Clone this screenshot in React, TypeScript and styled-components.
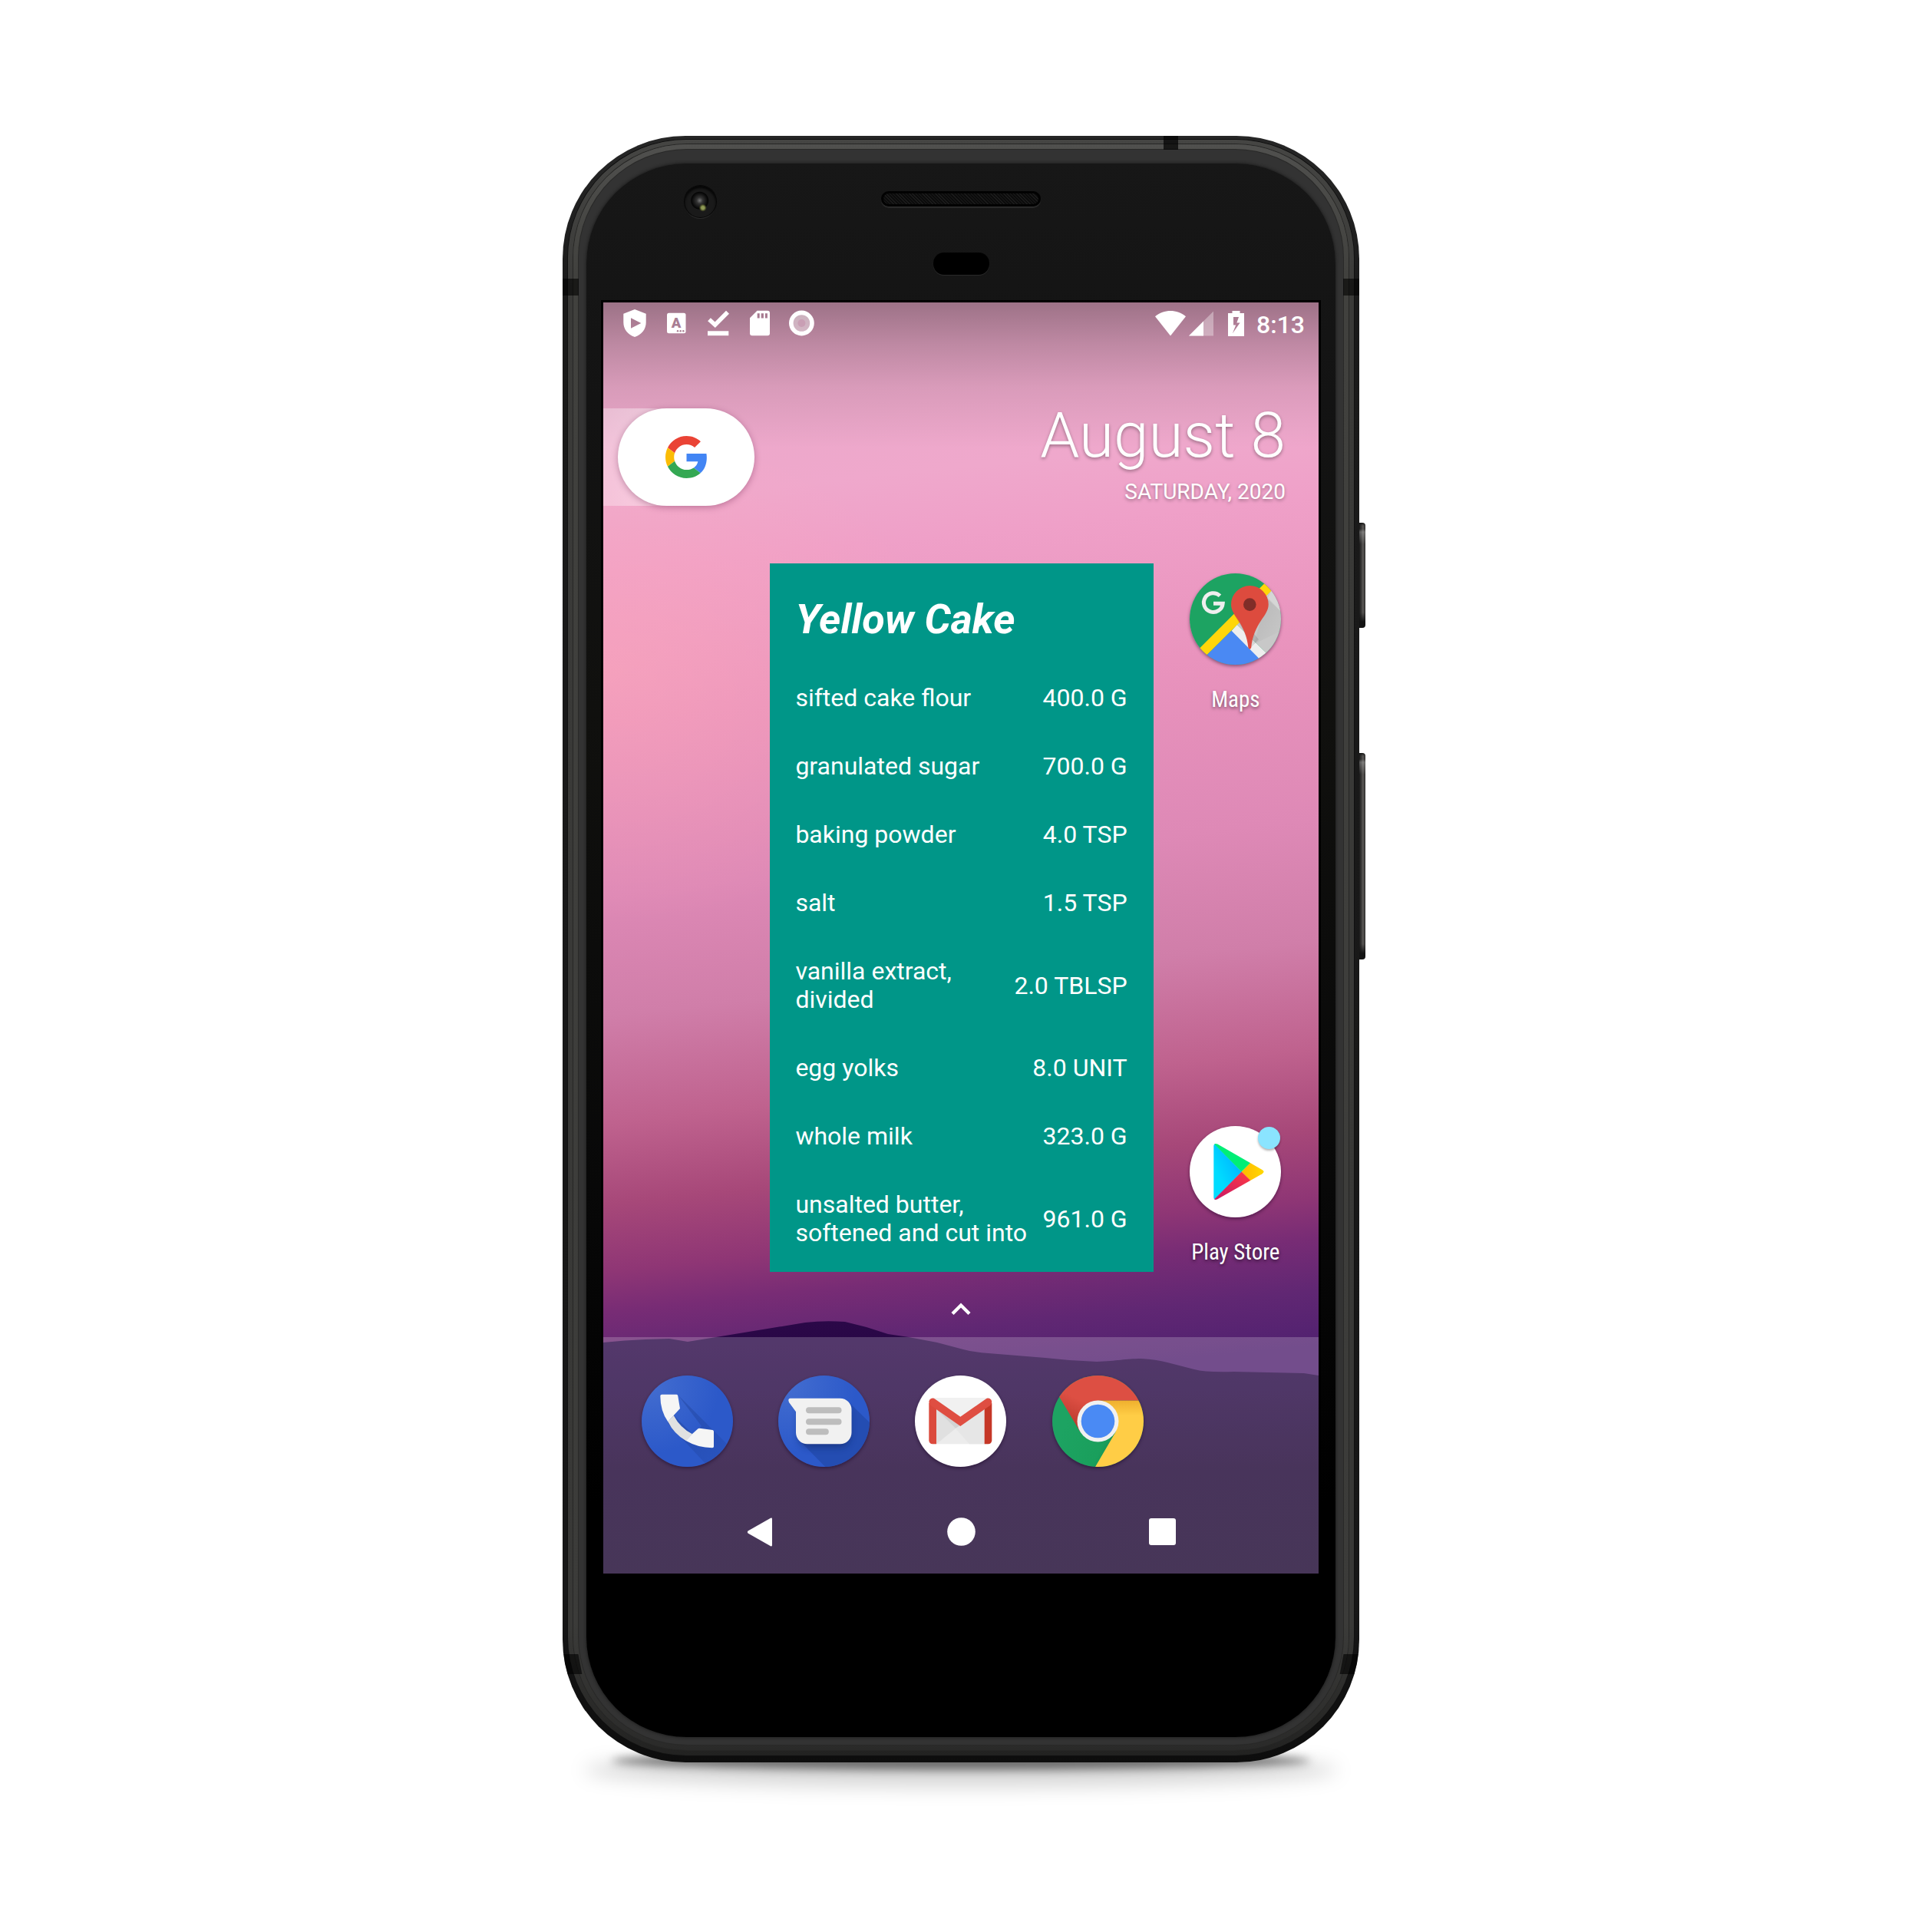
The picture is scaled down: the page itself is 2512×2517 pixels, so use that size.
import React from "react";
import styled, { createGlobalStyle } from "styled-components";

const GlobalStyle = createGlobalStyle`
  *, *::before, *::after { box-sizing: border-box; }
  body {
    margin: 0;
    background: #fff;
    color: #fff;
    font-family: Roboto, "Noto Sans", sans-serif;
  }
  button {
    margin: 0;
    padding: 0;
    border: 0;
    background: none;
    color: inherit;
    font: inherit;
    cursor: pointer;
  }
  svg { display: block; }
`;

/* ---------- device ---------- */

const Page = styled.main`
  display: flex;
  justify-content: center;
  padding: 177px 24px 221px;
`;

const Device = styled.div`
  display: flex;
  width: 100%;
  max-width: 1046px;
`;

const Body = styled.div`
  position: relative;
  flex: 1;
  min-width: 0;
`;

const GroundShadow = styled.div<{ $inset: number; $drop: number; $height: number; $blur: number; $alpha: number }>`
  position: absolute;
  left: ${(p) => p.$inset}px;
  right: ${(p) => p.$inset}px;
  bottom: ${(p) => -p.$drop}px;
  height: ${(p) => p.$height}px;
  border-radius: 50%;
  background: rgba(0, 0, 0, ${(p) => p.$alpha});
  filter: blur(${(p) => p.$blur}px);
`;

const Frame = styled.div`
  position: relative;
  overflow: hidden;
  padding: 5px 7px 9px;
  border-radius: 160px;
  background: linear-gradient(#262626, #1a1a1a 10%, #171717 90%, #0d0d0d);
`;

const OuterBand = styled.div`
  padding: 6px 7px 7px;
  border-radius: 154px;
  background: linear-gradient(#454543, #3a3a38 10%, #383836 92%, #222221);
  box-shadow: 0 0 0 1px #101010;
`;

const InnerBand = styled.div`
  padding: 7px 7px 7px;
  border-radius: 148px;
  background: linear-gradient(#50504e, #41413e 8%, #3b3b39 92%, #2a2a29);
  box-shadow: 0 0 0 1px #262625;
`;

const Rim = styled.div`
  padding: 18px 10px 10px;
  border-radius: 141px;
  background: #333;
  box-shadow: 0 0 0 1px #292928;
`;

const Glass = styled.div`
  display: flex;
  flex-direction: column;
  border-radius: 130px;
  background: linear-gradient(#171717, #131313 15%, #10100e 35%, #080808 65%, #000 85%);
  box-shadow: 0 0 4px #161616;
`;

const Antenna = styled.span<{ $side: "left" | "right"; $place: "upper" | "lower" }>`
  position: absolute;
  z-index: 1;
  ${(p) => p.$side}: 0;
  ${(p) => (p.$place === "upper" ? "top: 186px;" : "bottom: 115px;")}
  width: ${(p) => (p.$place === "upper" ? 21 : 27)}px;
  height: ${(p) => (p.$place === "upper" ? 22 : 26)}px;
  background: rgba(0, 0, 0, 0.6);
  clip-path: ${(p) => {
    if (p.$place === "upper") return "none";
    return p.$side === "left"
      ? "polygon(0 0, 76% 0, 94% 100%, 0 100%)"
      : "polygon(24% 0, 100% 0, 100% 100%, 6% 100%)";
  }};
`;

const TopAntenna = styled.span`
  position: absolute;
  z-index: 1;
  top: 0;
  right: 236px;
  width: 19px;
  height: 18px;
  background: rgba(0, 0, 0, 0.7);
`;

const SideKeys = styled.div`
  display: flex;
  flex-direction: column;
  gap: 163px;
  width: 8px;
  padding-top: 504px;
`;

const SideKey = styled.span<{ $length: number }>`
  height: ${(p) => p.$length}px;
  border-radius: 0 4px 4px 0;
  background:
    linear-gradient(#141414, transparent 4px, transparent calc(100% - 20px), #141414 calc(100% - 8px)),
    linear-gradient(transparent 8px, rgba(255, 255, 255, 0.25) 12px, transparent 28px),
    linear-gradient(90deg, #1b1b1b, #3a3938 35%, #5c5a58 60%, #2c2b2a);
`;

const TopBezel = styled.div`
  display: grid;
  grid-template-columns: 1fr 208px 1fr;
  height: 178px;
  padding: 0 18px;
`;

const CameraSlot = styled.div`
  padding: 29px 0 0 110px;
`;

const Camera = styled.span`
  display: block;
  width: 41px;
  height: 41px;
  border-radius: 50%;
  background:
    radial-gradient(circle at 58% 70%, #8f9a55 0 2px, rgba(90, 96, 40, 0.5) 4px, transparent 5px),
    radial-gradient(circle at 48% 47%, #777 0, #333 4px, #0a0a0a 10px, #050505 11px, transparent 12px),
    #1a1a1a;
  box-shadow: 0 0 0 1px #070707, inset 0 3px 3px #050505, 0 2px 1px #2c2c2c;
`;

const Sensors = styled.div`
  display: flex;
  flex-direction: column;
  align-items: center;
  gap: 60px;
  padding-top: 36px;
`;

const Speaker = styled.span`
  width: 100%;
  height: 20px;
  border-radius: 10px;
  border: 3px solid #020202;
  background: repeating-linear-gradient(45deg, #1b1b1b 0 1px, #0c0c0c 1px 3px);
  box-shadow: 0 2px 1px #2b2b2b;
`;

const Proximity = styled.span`
  width: 73px;
  height: 29px;
  border-radius: 14px;
  background: #000;
  box-shadow: 0 1px 1px #2b2b2b;
`;

const Chin = styled.div`
  height: 210px;
`;

/* ---------- screen ---------- */

const Screen = styled.div`
  position: relative;
  isolation: isolate;
  display: flex;
  flex-direction: column;
  margin: 0 19px;
  border: 3px solid #000;
  overflow: hidden;
  background:
    linear-gradient(
      rgba(0, 0, 0, 0.32),
      rgba(0, 0, 0, 0.19) 54px,
      rgba(0, 0, 0, 0.08) 110px,
      transparent 190px
    ),
    radial-gradient(ellipse 460px 330px at 0 480px, rgba(255, 170, 185, 0.5), transparent),
    linear-gradient(
      174deg,
      #e6a8c6 0,
      #efa8cc 15%,
      #efa0c8 20%,
      #e993bd 31%,
      #de89b6 44%,
      #d07ea9 53%,
      #bf628e 61%,
      #a74879 67%,
      #8f3675 72%,
      #782c75 75%,
      #602773 79%,
      #512170 83%
    );
`;

const Hills = styled.svg`
  position: absolute;
  z-index: -1;
  left: 0;
  bottom: 0;
  width: 100%;
  height: 336px;
`;

const StatusBar = styled.header`
  display: flex;
  justify-content: space-between;
  height: 54px;
  padding: 0 18px 0 14px;
`;

const StatusGroup = styled.div`
  display: flex;
  align-items: center;
`;

const Clock = styled.time`
  margin-left: 16px;
  font-size: 32px;
  line-height: 40px;
  padding-top: 4px;
  font-weight: 500;
`;

const Gap = styled.span<{ $size: number }>`
  width: ${(p) => p.$size}px;
`;

const Glance = styled.section`
  display: flex;
  justify-content: space-between;
  align-items: flex-start;
  height: 286px;
`;

const SearchTab = styled.div`
  margin-top: 84px;
  padding-left: 19px;
  background: linear-gradient(90deg, rgba(255, 255, 255, 0.3), rgba(255, 255, 255, 0.4) 60px, transparent 90px);
`;

const SearchPill = styled.button`
  display: flex;
  align-items: center;
  justify-content: center;
  width: 178px;
  height: 127px;
  border-radius: 64px;
  background: #fff;
  box-shadow: 0 2px 8px rgba(90, 20, 60, 0.35);
`;

const DateBlock = styled.div`
  display: flex;
  flex-direction: column;
  align-items: flex-end;
  gap: 10px;
  margin-top: 71px;
  padding-right: 43px;
  text-shadow: 0 2px 4px rgba(0, 0, 0, 0.35);
`;

const DateMain = styled.span`
  font-size: 82px;
  line-height: 96px;
  font-weight: 300;
`;

const DateSub = styled.span`
  font-size: 28px;
  line-height: 32px;
  text-transform: uppercase;
`;

const Workspace = styled.section`
  display: grid;
  grid-template-columns: repeat(5, 1fr);
  padding: 0 19px 0 21px;
`;

const Recipe = styled.article`
  grid-column: 2 / 5;
  margin: 0 18px;
  padding: 41px 34px 6px 33px;
  background: #009688;
`;

const RecipeTitle = styled.h1`
  margin: 0 0 26px;
  font-size: 54px;
  line-height: 64px;
  font-weight: 700;
  font-style: italic;
`;

const Ingredients = styled.ul`
  margin: 0;
  padding: 0;
  list-style: none;
`;

const Ingredient = styled.li`
  display: flex;
  align-items: center;
  justify-content: space-between;
  gap: 10px;
  padding: 26px 0;
  font-size: 32px;
  line-height: 37px;
`;

const Amount = styled.span`
  flex: none;
`;

const AppColumn = styled.div`
  display: flex;
  flex-direction: column;
  justify-content: space-between;
  padding: 13px 0 10px;
`;

const AppButton = styled.button`
  display: flex;
  flex-direction: column;
  align-items: center;
  gap: 29px;
`;

const IconWrap = styled.span`
  position: relative;
  border-radius: 50%;
  box-shadow: 0 2px 4px rgba(20, 0, 30, 0.45);
`;

const Badge = styled.span`
  position: absolute;
  top: 1px;
  right: 1px;
  width: 29px;
  height: 29px;
  border-radius: 50%;
  background: #8ae4ff;
  box-shadow: 0 2px 3px rgba(0, 0, 0, 0.3);
`;

const AppLabel = styled.span`
  font-family: "Roboto Condensed", Roboto, sans-serif;
  font-size: 29px;
  line-height: 32px;
  white-space: nowrap;
  text-shadow: 0 2px 4px rgba(0, 0, 0, 0.5);
`;

const DrawerHandle = styled.button`
  display: flex;
  justify-content: center;
  height: 85px;
  padding-top: 38px;
`;

const Shelf = styled.footer`
  background: rgba(255, 255, 255, 0.2);
`;

const Dock = styled.div`
  display: grid;
  grid-template-columns: repeat(5, 1fr);
  padding: 50px 20px 30px;
`;

const NavBar = styled.nav`
  display: grid;
  grid-template-columns: repeat(3, 262px);
  justify-content: center;
  height: 109px;
`;

const NavButton = styled.button`
  display: flex;
  align-items: center;
  justify-content: center;
`;

/* ---------- drawings ---------- */

const GoogleG = () => (
  <svg width="55" height="55" viewBox="0 0 48 48">
    <path fill="#ea4335" d="M24 9.5c3.54 0 6.71 1.22 9.21 3.6l6.85-6.85C35.9 2.38 30.47 0 24 0 14.62 0 6.51 5.38 2.56 13.22l7.98 6.19C12.43 13.72 17.74 9.5 24 9.5z" />
    <path fill="#4285f4" d="M46.98 24.55c0-1.57-.15-3.09-.38-4.55H24v9.02h12.94c-.58 2.96-2.26 5.48-4.78 7.18l7.73 6c4.51-4.18 7.09-10.36 7.09-17.65z" />
    <path fill="#fbbc05" d="M10.53 28.59c-.48-1.45-.76-2.99-.76-4.59s.27-3.14.76-4.59l-7.98-6.19C.92 16.46 0 20.12 0 24c0 3.88.92 7.54 2.56 10.78l7.97-6.19z" />
    <path fill="#34a853" d="M24 48c6.48 0 11.93-2.13 15.89-5.81l-7.73-6c-2.15 1.45-4.92 2.3-8.16 2.3-6.26 0-11.57-4.22-13.47-9.91l-7.98 6.19C6.51 42.62 14.62 48 24 48z" />
  </svg>
);

const NoticeIcons = () => (
  <>
    <svg width="54" height="54" viewBox="0 0 54 54">
      <path fill="#fff" fillRule="evenodd" d="M27 9 41.7 14.7V26C41.7 35 36 42 27 45 18 42 12.3 35 12.3 26V14.7ZM22 20.3V33.7L35.3 27Z" />
    </svg>
    <svg width="54" height="54" viewBox="0 0 54 54">
      <rect x="15" y="13.7" width="24.5" height="26.6" rx="2.5" fill="#fff" />
      <text x="27" y="33.3" textAnchor="middle" fontFamily="Roboto, sans-serif" fontWeight="900" fontSize="18.5" fill="#a97e93">A</text>
      <g fill="#a97e93">
        <circle cx="29" cy="37.3" r="1.2" />
        <circle cx="32.7" cy="37.3" r="1.2" />
        <circle cx="36.3" cy="37.3" r="1.2" />
      </g>
    </svg>
    <svg width="54" height="54" viewBox="0 0 54 54">
      <path d="M16 22.2 23.7 29.2 40 12.8" fill="none" stroke="#fff" strokeWidth="5.6" />
      <rect x="14" y="37.3" width="27.3" height="5.9" fill="#fff" />
    </svg>
    <svg width="54" height="54" viewBox="0 0 54 54">
      <path fill="#fff" fillRule="evenodd" d="M24.5 10.7H38A3 3 0 0 1 41 13.7V40.3A3 3 0 0 1 38 43.3H18A3 3 0 0 1 15 40.3V20.3ZM24.7 14.3V20.5H27.7V14.3ZM29.7 14.3V20.5H32.9V14.3ZM34.9 14.3V20.5H37.9V14.3Z" />
    </svg>
    <svg width="54" height="54" viewBox="0 0 54 54">
      <circle cx="28.4" cy="27" r="13.6" fill="rgba(255,255,255,.42)" stroke="#fff" strokeWidth="5.6" />
      <circle cx="28.4" cy="27" r="5" fill="#c99fb4" />
    </svg>
  </>
);

const Wifi = () => (
  <svg width="40" height="33" viewBox="0 0 40 33">
    <path fill="#fff" d="M0 7.3C12-2.4 28-2.4 40 7.3L20 32.6Z" />
  </svg>
);

const Signal = () => (
  <svg width="32" height="33" viewBox="0 0 32 33">
    <path fill="rgba(255,255,255,.35)" d="M0 32.6 32 .6V32.6Z" />
    <path fill="#fff" d="M0 32.6 19 13.6V32.6Z" />
  </svg>
);

const Battery = () => (
  <svg width="21" height="33" viewBox="0 0 21 33">
    <path fill="#fff" fillRule="evenodd" d="M5.5 0H15.5V3H21V33H0V3H5.5ZM7 8V18.5H10.2L5.8 29.5 15.6 15.6H11.4L14 8Z" />
  </svg>
);

const MapsIcon = () => (
  <svg width="119" height="119" viewBox="0 0 119 119">
    <defs>
      <clipPath id="maps-disc"><circle cx="59.5" cy="59.5" r="59.5" /></clipPath>
      <linearGradient id="maps-shade" x1="0" y1="0" x2="1" y2="1">
        <stop offset="0.2" stopColor="#000" stopOpacity="0.2" />
        <stop offset="1" stopColor="#000" stopOpacity="0" />
      </linearGradient>
    </defs>
    <g clipPath="url(#maps-disc)">
      <rect width="119" height="119" fill="#1da362" />
      <path fill="#c8c8c8" d="M61.7 66.7 125 3.4V128Z" />
      <path fill="#d6d6d6" d="M106 23.3 125 4V56L102 32Z" />
      <path fill="#eee" d="M54.3 75 61.7 66.7 125 128H105Z" />
      <path fill="#4a89f3" d="M54.3 74.6 108 128.6H0Z" />
      <path fill="#ffd60a" d="M4 106.6 125-14.4 125 4.3 13.5 115Z" />
      <path fill="url(#maps-shade)" d="M84 92 100 32 119 50V75Z" opacity="0.35" />
      <path fill="#000" opacity="0.1" d="M56 50C62 62 74 76 78.3 98.3L90 86 60 50Z" />
    </g>
    <path fill="none" stroke="#eee" strokeWidth="5" d="M39.5 29.2A12.4 12.4 0 1 0 43.2 39.2H31" />
    <path fill="#dd4b3e" d="M78.3 16A24.4 24.4 0 0 1 102.7 40.4C102.7 48 98 54 93 61.5 87 70.5 81.5 82 80.2 96.8Q78.3 100.5 76.4 96.8C75 82 69.5 70.5 63.5 61.5 58.5 54 54 48 54 40.4A24.4 24.4 0 0 1 78.3 16Z" />
    <circle cx="78.3" cy="40.6" r="8.3" fill="#802d28" />
  </svg>
);

const PlayIcon = () => (
  <svg width="119" height="119" viewBox="0 0 119 119">
    <defs>
      <clipPath id="play-shape">
        <path d="M31.3 26.5Q31.3 21.5 36.3 23.6L94.5 57Q98.5 59.6 94.5 62.3L36.3 95.3Q31.3 97.4 31.3 92.5Z" />
      </clipPath>
      <linearGradient id="play-blue" x1="1" y1="0" x2="0" y2="1">
        <stop offset="0" stopColor="#00a6ff" />
        <stop offset="0.7" stopColor="#00dcff" />
      </linearGradient>
      <linearGradient id="play-yellow" x1="1" y1="0" x2="0" y2="0">
        <stop offset="0" stopColor="#ffdc00" />
        <stop offset="1" stopColor="#ffb800" />
      </linearGradient>
      <linearGradient id="play-red" x1="1" y1="0" x2="0" y2="1">
        <stop offset="0" stopColor="#ff3a44" />
        <stop offset="1" stopColor="#c31668" />
      </linearGradient>
    </defs>
    <circle cx="59.5" cy="59.5" r="59.5" fill="#fff" />
    <g clipPath="url(#play-shape)">
      <path fill="url(#play-blue)" d="M31 22 68 59.6 31 97Z" />
      <path fill="#00ee76" d="M31 22.5V20H60L80 47.4 67.7 59.6Z" />
      <path fill="url(#play-yellow)" d="M79.3 47.7 100 50V70L79.3 71.5 67.7 59.6Z" />
      <path fill="url(#play-red)" d="M31 96.5V99H60L79.6 71.3 67.7 59.6Z" />
    </g>
  </svg>
);

const BlueDisc = ({ id }: { id: string }) => (
  <defs>
    <clipPath id={`${id}-disc`}><circle cx="59.5" cy="59.5" r="59.5" /></clipPath>
    <radialGradient id={`${id}-fill`} cx="0.1" cy="0.1" r="1">
      <stop offset="0" stopColor="#436dd0" />
      <stop offset="0.75" stopColor="#2c59c9" />
    </radialGradient>
    <linearGradient id={`${id}-shade`} x1="0" y1="0" x2="1" y2="1">
      <stop offset="0.3" stopColor="#1c3c90" stopOpacity="0.6" />
      <stop offset="1" stopColor="#1c3c90" stopOpacity="0.1" />
    </linearGradient>
  </defs>
);

const PhoneIcon = () => (
  <svg width="119" height="119" viewBox="0 0 119 119">
    <BlueDisc id="phone" />
    <circle cx="59.5" cy="59.5" r="59.5" fill="url(#phone-fill)" />
    <path clipPath="url(#phone-disc)" fill="url(#phone-shade)" opacity="0.6" d="M47 25 125 103V160L34 62 42 52 66 76 78 66Z" />
    <path fill="#f5f5f5" d="M26.3 24.7H45.5Q47 24.7 47.2 26.2L50 43 41.7 52 34.3 60.3Q24.3 46 24.3 26.7 24.3 24.7 26.3 24.7Z" />
    <path fill="#e1e1e1" d="M41.7 52Q50 68 66 76.3L58 85.3Q42 76 34.3 60Z" />
    <path fill="#f5f5f5" d="M66 76 73.5 69.3Q74.3 68.5 75.5 68.7L92.5 71Q94 71.3 94 73V92.5Q94 94.3 92 94.3 73 94 57.8 85Z" />
  </svg>
);

const MessagesIcon = () => (
  <svg width="119" height="119" viewBox="0 0 119 119">
    <BlueDisc id="messages" />
    <defs>
      <filter id="messages-blur" x="-30%" y="-30%" width="160%" height="160%">
        <feGaussianBlur stdDeviation="4" />
      </filter>
    </defs>
    <circle cx="59.5" cy="59.5" r="59.5" fill="url(#messages-fill)" />
    <g clipPath="url(#messages-disc)">
      <path fill="#1f449f" opacity="0.55" d="M91 34 130 72V130H72L27 84Z" />
      <rect x="26" y="40" width="68" height="54" rx="15" fill="#12296b" opacity="0.55" filter="url(#messages-blur)" />
    </g>
    <path fill="#f1f1f1" d="M15.5 29.7H80.5A15 15 0 0 1 95.5 44.7V74.3A15 15 0 0 1 80.5 89.3H38A15 15 0 0 1 23 74.3V47.3L14 35Q12 30 15.5 29.7Z" />
    <g fill="#bdbdbd">
      <rect x="36" y="41.3" width="46.5" height="8" rx="4" />
      <rect x="36" y="56.3" width="46.5" height="8" rx="4" />
      <rect x="36" y="69.3" width="29.8" height="8" rx="4" />
    </g>
  </svg>
);

const GmailIcon = () => (
  <svg width="119" height="119" viewBox="0 0 119 119">
    <circle cx="59.5" cy="59.5" r="59.5" fill="#fff" />
    <rect x="23" y="29.3" width="73" height="60" fill="#ececec" />
    <path fill="#e0e0e0" d="M28 44 53 69 28 89.3Z" />
    <path fill="#d2d2d2" d="M28 44 59.3 66 53 69Z" />
    <path fill="#e6e6e6" d="M53 69 90.7 44V89.3H71Z" />
    <path fill="#f1f1f1" d="M24 29.3H94L59.3 54Z" />
    <path fill="#db4a3d" d="M18.3 36H28V89.3H23A4.7 4.7 0 0 1 18.3 84.6Z" />
    <path fill="#c53727" d="M100.3 36H90.7V89.3H95.6A4.7 4.7 0 0 0 100.3 84.6Z" />
    <path fill="#df4e42" d="M18.3 34.2A4.9 4.9 0 0 1 26 30.4L59.3 53.8 92.6 30.4A4.9 4.9 0 0 1 100.3 34.2Q100.3 37 98 39L59.3 66 20.6 39Q18.3 37 18.3 34.2Z" />
  </svg>
);

const ChromeIcon = () => (
  <svg width="119" height="119" viewBox="0 0 119 119">
    <defs>
      <clipPath id="chrome-disc"><circle cx="59.5" cy="59.5" r="59.5" /></clipPath>
      <linearGradient id="chrome-red" x1="0.1" y1="0.9" x2="0.4" y2="0.5">
        <stop offset="0" stopColor="#b23328" />
        <stop offset="1" stopColor="#dd4f43" />
      </linearGradient>
      <linearGradient id="chrome-yellow" x1="0" y1="0" x2="0" y2="1">
        <stop offset="0" stopColor="#efb02e" />
        <stop offset="0.2" stopColor="#ffcd46" />
      </linearGradient>
      <linearGradient id="chrome-green" x1="0.2" y1="0.4" x2="0.85" y2="0.7">
        <stop offset="0" stopColor="#1da362" />
        <stop offset="0.65" stopColor="#1a9f5c" />
        <stop offset="1" stopColor="#12804a" />
      </linearGradient>
    </defs>
    <g clipPath="url(#chrome-disc)">
      <rect width="119" height="119" fill="url(#chrome-green)" />
      <path fill="url(#chrome-red)" d="M36.1 73 9.3 28-10-5H119V32.7H59.5V60Z" />
      <path fill="url(#chrome-yellow)" d="M59.5 32.7H130V130H49.6L82.9 73 59.5 60Z" />
    </g>
    <circle cx="59.5" cy="59.5" r="27" fill="#f1f1f1" />
    <circle cx="59.5" cy="59.5" r="21.8" fill="#4a8af4" />
  </svg>
);

const HillScene = () => (
  <Hills viewBox="0 1320 932 336" preserveAspectRatio="none" aria-hidden="true">
    <defs>
      <linearGradient id="hill-fill" x1="0" y1="0" x2="0" y2="1">
        <stop offset="0" stopColor="#2b0848" />
        <stop offset="0.25" stopColor="#240542" />
        <stop offset="0.6" stopColor="#1b0232" />
        <stop offset="1" stopColor="#1a042f" />
      </linearGradient>
    </defs>
    <path
      fill="url(#hill-fill)"
      d="M0 1355Q28 1352 55 1351L86 1350 110 1354 153 1347 214 1337 263 1329Q288 1326 315 1328L343 1335 371 1344 398 1348 435 1355 469 1364Q485 1368 502 1369L576 1375Q610 1379 643 1380C670 1379 680 1376 701 1376Q720 1377 735 1381L770 1390Q785 1394 821 1393L913 1395 932 1398V1656H0Z"
    />
  </Hills>
);

/* ---------- data ---------- */

const ingredients = [
  { name: "sifted cake flour", amount: "400.0 G" },
  { name: "granulated sugar", amount: "700.0 G" },
  { name: "baking powder", amount: "4.0 TSP" },
  { name: "salt", amount: "1.5 TSP" },
  { name: "vanilla extract, divided", amount: "2.0 TBLSP" },
  { name: "egg yolks", amount: "8.0 UNIT" },
  { name: "whole milk", amount: "323.0 G" },
  { name: "unsalted butter, softened and cut into", amount: "961.0 G" },
];

const dockApps = [
  { name: "Phone", Icon: PhoneIcon },
  { name: "Messages", Icon: MessagesIcon },
  { name: "Gmail", Icon: GmailIcon },
  { name: "Chrome", Icon: ChromeIcon },
];

export default function App() {
  return (
    <>
      <GlobalStyle />
      <Page>
        <Device>
          <Body>
            <GroundShadow $inset={28} $drop={32} $height={44} $blur={12} $alpha={0.16} />
            <GroundShadow $inset={64} $drop={10} $height={24} $blur={6} $alpha={0.5} />
            <Frame>
              <TopAntenna />
              <Antenna $side="left" $place="upper" />
              <Antenna $side="right" $place="upper" />
              <Antenna $side="left" $place="lower" />
              <Antenna $side="right" $place="lower" />
              <OuterBand>
                <InnerBand>
                  <Rim>
                    <Glass>
                      <TopBezel>
                        <CameraSlot>
                          <Camera />
                        </CameraSlot>
                        <Sensors>
                          <Speaker />
                          <Proximity />
                        </Sensors>
                      </TopBezel>
                      <Screen>
                        <HillScene />
                        <StatusBar>
                          <StatusGroup>
                            <NoticeIcons />
                          </StatusGroup>
                          <StatusGroup>
                            <Wifi />
                            <Gap $size={4} />
                            <Signal />
                            <Gap $size={19} />
                            <Battery />
                            <Clock>8:13</Clock>
                          </StatusGroup>
                        </StatusBar>
                        <Glance>
                          <SearchTab>
                            <SearchPill aria-label="Google search">
                              <GoogleG />
                            </SearchPill>
                          </SearchTab>
                          <DateBlock>
                            <DateMain>August 8</DateMain>
                            <DateSub>Saturday, 2020</DateSub>
                          </DateBlock>
                        </Glance>
                        <Workspace>
                          <Recipe>
                            <RecipeTitle>Yellow Cake</RecipeTitle>
                            <Ingredients>
                              {ingredients.map((item) => (
                                <Ingredient key={item.name}>
                                  <span>{item.name}</span>
                                  <Amount>{item.amount}</Amount>
                                </Ingredient>
                              ))}
                            </Ingredients>
                          </Recipe>
                          <AppColumn>
                            <AppButton>
                              <IconWrap>
                                <MapsIcon />
                              </IconWrap>
                              <AppLabel>Maps</AppLabel>
                            </AppButton>
                            <AppButton>
                              <IconWrap>
                                <PlayIcon />
                                <Badge />
                              </IconWrap>
                              <AppLabel>Play Store</AppLabel>
                            </AppButton>
                          </AppColumn>
                        </Workspace>
                        <DrawerHandle aria-label="All apps">
                          <svg width="28" height="20" viewBox="0 0 28 20">
                            <path d="M3 16.5 14 5.5 25 16.5" fill="none" stroke="#fff" strokeWidth="4.4" />
                          </svg>
                        </DrawerHandle>
                        <Shelf>
                          <Dock>
                            {dockApps.map(({ name, Icon }) => (
                              <AppButton key={name} aria-label={name}>
                                <IconWrap>
                                  <Icon />
                                </IconWrap>
                              </AppButton>
                            ))}
                          </Dock>
                          <NavBar>
                            <NavButton aria-label="Back">
                              <svg width="34" height="38" viewBox="0 0 34 38">
                                <path fill="#fff" d="M31 .8Q33 0 33 2V36Q33 38 31 37.2L1.5 20.5Q0 19 1.5 17.5Z" />
                              </svg>
                            </NavButton>
                            <NavButton aria-label="Home">
                              <svg width="37" height="37" viewBox="0 0 37 37">
                                <circle cx="18.5" cy="18.5" r="18.3" fill="#fff" />
                              </svg>
                            </NavButton>
                            <NavButton aria-label="Recent apps">
                              <svg width="35" height="35" viewBox="0 0 35 35">
                                <rect width="35" height="35" rx="3" fill="#fff" />
                              </svg>
                            </NavButton>
                          </NavBar>
                        </Shelf>
                      </Screen>
                      <Chin />
                    </Glass>
                  </Rim>
                </InnerBand>
              </OuterBand>
            </Frame>
          </Body>
          <SideKeys>
            <SideKey $length={137} />
            <SideKey $length={269} />
          </SideKeys>
        </Device>
      </Page>
    </>
  );
}
